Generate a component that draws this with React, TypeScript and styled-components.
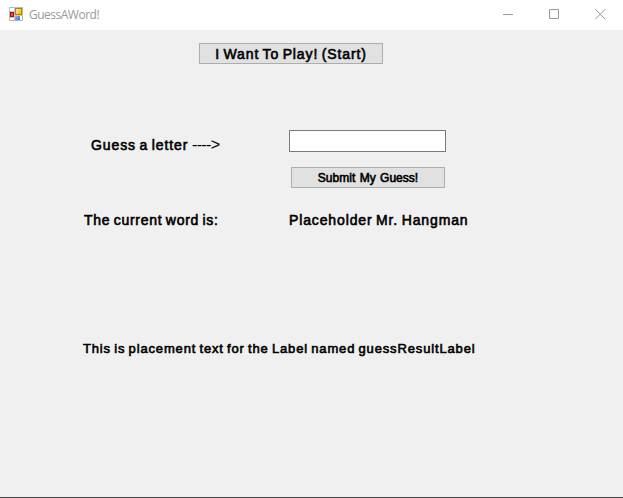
import React from "react";
import styled, { createGlobalStyle } from "styled-components";

const GlobalStyle = createGlobalStyle`
  * { box-sizing: border-box; }
  body { margin: 0; overflow: hidden; background: #f0f0f0; }
`;

const Window = styled.main`
  display: flex;
  flex-direction: column;
  width: 623px;
  height: 498px;
  background: #f0f0f0;
  border-bottom: 1px solid #444;
  font-family: "Liberation Sans", Arial, sans-serif;
  color: #000;
`;

const TitleBar = styled.header`
  display: flex;
  align-items: center;
  height: 30px;
  padding-left: 9px;
  background: #fff;
`;

const Title = styled.h1`
  flex: 1;
  margin: 0 0 0 6px;
  font: 400 12px/16px "Open Sans", "Noto Sans", sans-serif;
  letter-spacing: -0.5px;
  color: #999;
`;

const Controls = styled.nav`
  display: flex;
`;

const ControlButton = styled.button`
  display: flex;
  align-items: center;
  justify-content: center;
  width: 46px;
  height: 30px;
  padding: 0 0 2px;
  border: 0;
  background: none;
`;

const Form = styled.form`
  display: flex;
  flex-direction: column;
  align-items: flex-start;
  padding-top: 13px;
`;

const Row = styled.div<{ $top: number; $left: number }>`
  display: flex;
  align-items: flex-start;
  height: 22px;
  margin-top: ${(p) => p.$top}px;
  padding-left: ${(p) => p.$left}px;
`;

const Label = styled.label<{
  $size?: number;
  $spacing?: number;
  $wordSpacing?: number;
  $width?: number;
  $drop?: number;
}>`
  width: ${(p) => (p.$width ? `${p.$width}px` : "auto")};
  padding-top: ${(p) => p.$drop ?? 0}px;
  font-size: ${(p) => p.$size ?? 14}px;
  line-height: 16px;
  letter-spacing: ${(p) => p.$spacing ?? 0}px;
  word-spacing: ${(p) => p.$wordSpacing ?? -1.2}px;
  white-space: pre;
  -webkit-text-stroke: 0.6px #000;
`;

const Arrow = styled.span`
  font-size: 16px;
  line-height: 1px;
  letter-spacing: -0.65px;
  -webkit-text-stroke: 0.1px #000;
`;

const Button = styled.button<{ $width: number }>`
  display: flex;
  align-items: center;
  justify-content: center;
  width: ${(p) => p.$width}px;
  height: 21px;
  padding: 1px 0 0;
  border: 1px solid #adadad;
  background: #e1e1e1;
  font-family: inherit;
  color: #000;
`;

const LetterInput = styled.input`
  width: 157px;
  height: 22px;
  padding: 0 3px;
  border: 1px solid #7a7a7a;
  background: #fff;
  font: 14px "Liberation Sans", sans-serif;
  outline: none;
`;

const IconFrame = styled.svg`
  margin-bottom: 2px;
`;

const AppIcon = () => (
  <IconFrame width="14" height="14" viewBox="0 0 14 14" shapeRendering="crispEdges">
    <defs>
      <linearGradient id="gold" x2="1" y2="1">
        <stop stopColor="#fff2a0" />
        <stop offset="1" stopColor="#efb000" />
      </linearGradient>
      <linearGradient id="blue" x2="1" y2="1">
        <stop stopColor="#8dbcff" />
        <stop offset="1" stopColor="#2f6fdc" />
      </linearGradient>
    </defs>
    <path d="M0.5 0.5h13v13h-13z" fill="#fff" stroke="#b9b9b9" />
    <path d="M5.5 1v12M1 4.5h4M1 10.5h4M5 8.5h8" stroke="#c9c9c9" fill="none" />
    <rect x="6.5" y="1.5" width="6" height="6" fill="url(#gold)" stroke="#b98300" />
    <rect x="1.5" y="5.5" width="3" height="4" fill="#e2543c" stroke="#a80c0c" />
    <rect x="6" y="9" width="5" height="4" fill="url(#blue)" />
  </IconFrame>
);

const glyphs = {
  Minimize: <path d="M0 5.5h10" />,
  Maximize: <path d="M.5.5h9v9h-9z" />,
  Close: <path d="M.3.3l9.9 9.9M10.2.3L.3 10.2" />,
};

export default function App() {
  return (
    <>
      <GlobalStyle />
      <Window>
        <TitleBar>
          <AppIcon />
          <Title>GuessAWord!</Title>
          <Controls>
            {Object.entries(glyphs).map(([name, glyph]) => (
              <ControlButton key={name} aria-label={name}>
                <svg width={name === "Close" ? 11 : 10} height={name === "Close" ? 11 : 10} fill="none" stroke="#999">
                  {glyph}
                </svg>
              </ControlButton>
            ))}
          </Controls>
        </TitleBar>
        <Form onSubmit={(e) => e.preventDefault()}>
          <Row $top={0} $left={199}>
            <Button type="button" $width={184}>
              <Label as="span" $spacing={0.88}>I Want To Play! (Start)</Label>
            </Button>
          </Row>
          <Row $top={65} $left={91}>
            <Label $width={198} $spacing={0.9} $drop={7} htmlFor="letter">
              {"Guess a letter "}
              <Arrow>{"---->"}</Arrow>
            </Label>
            <LetterInput id="letter" />
          </Row>
          <Row $top={15} $left={291}>
            <Button $width={154}>
              <Label as="span" $size={12} $spacing={0.02} $wordSpacing={1}>Submit My Guess!</Label>
            </Button>
          </Row>
          <Row $top={20} $left={84}>
            <Label as="span" $width={205} $spacing={0.73} $drop={3}>The current word is:</Label>
            <Label as="span" $spacing={0.87} $drop={3}>Placeholder Mr. Hangman</Label>
          </Row>
          <Row $top={107} $left={83}>
            <Label as="span" $size={13} $spacing={0.85} $drop={3}>
              This is placement text for the Label named guessResultLabel
            </Label>
          </Row>
        </Form>
      </Window>
    </>
  );
}
